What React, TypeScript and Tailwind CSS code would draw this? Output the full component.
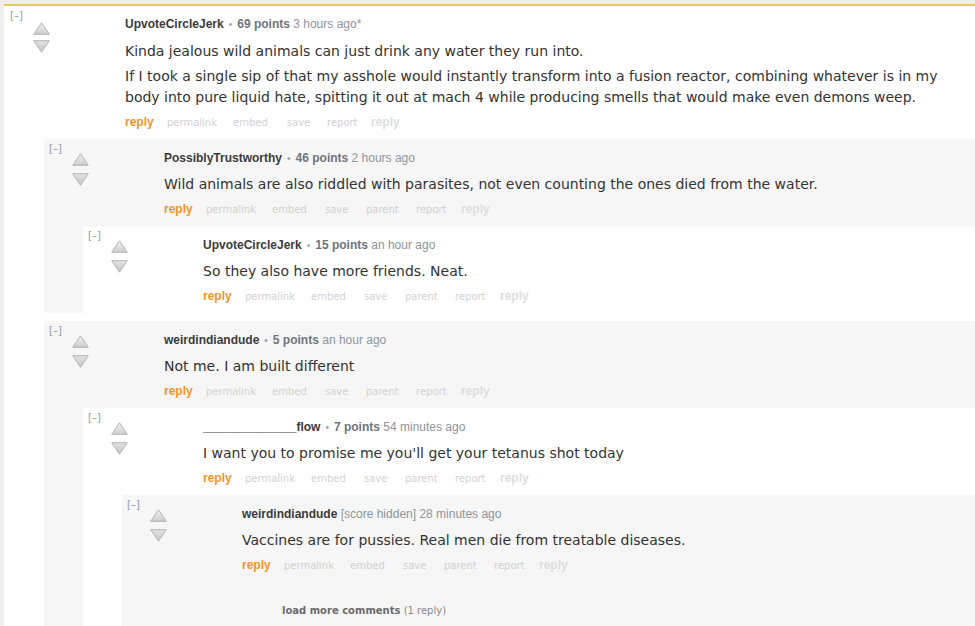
import React from 'react';

type Btn = { label: string; w: string; kind: 'reply' | 'faint' | 'last' };

type CommentData = {
  author: string;
  points?: string;
  time: string;
  body: string[];
  buttons: Btn[];
  children?: CommentData[];
  more?: boolean;
};

const topButtons: Btn[] = [
  { label: 'reply', w: 'w-[42px]', kind: 'reply' },
  { label: 'permalink', w: 'w-[66px]', kind: 'faint' },
  { label: 'embed', w: 'w-[54px]', kind: 'faint' },
  { label: 'save', w: 'w-[40px]', kind: 'faint' },
  { label: 'report', w: 'w-[44px]', kind: 'faint' },
  { label: 'reply', w: '', kind: 'last' },
];

const childButtons: Btn[] = [
  { label: 'reply', w: 'w-[42px]', kind: 'reply' },
  { label: 'permalink', w: 'w-[66px]', kind: 'faint' },
  { label: 'embed', w: 'w-[53px]', kind: 'faint' },
  { label: 'save', w: 'w-[41px]', kind: 'faint' },
  { label: 'parent', w: 'w-[50px]', kind: 'faint' },
  { label: 'report', w: 'w-[45px]', kind: 'faint' },
  { label: 'reply', w: '', kind: 'last' },
];

const thread: CommentData = {
  author: 'UpvoteCircleJerk',
  points: '69 points',
  time: '3 hours ago*',
  body: [
    'Kinda jealous wild animals can just drink any water they run into.',
    'If I took a single sip of that my asshole would instantly transform into a fusion reactor, combining whatever is in my body into pure liquid hate, spitting it out at mach 4 while producing smells that would make even demons weep.',
  ],
  buttons: topButtons,
  children: [
    {
      author: 'PossiblyTrustworthy',
      points: '46 points',
      time: '2 hours ago',
      body: ['Wild animals are also riddled with parasites, not even counting the ones died from the water.'],
      buttons: childButtons,
      children: [
        {
          author: 'UpvoteCircleJerk',
          points: '15 points',
          time: 'an hour ago',
          body: ['So they also have more friends. Neat.'],
          buttons: childButtons,
        },
      ],
    },
    {
      author: 'weirdindiandude',
      points: '5 points',
      time: 'an hour ago',
      body: ['Not me. I am built different'],
      buttons: childButtons,
      children: [
        {
          author: '______________flow',
          points: '7 points',
          time: '54 minutes ago',
          body: ["I want you to promise me you'll get your tetanus shot today"],
          buttons: childButtons,
          children: [
            {
              author: 'weirdindiandude',
              time: '28 minutes ago',
              body: ['Vaccines are for pussies. Real men die from treatable diseases.'],
              buttons: childButtons,
              more: true,
            },
          ],
        },
      ],
    },
  ],
};

function UpArrow() {
  return (
    <svg width="17" height="13" viewBox="0 0 17 13">
      <defs>
        <linearGradient id="arrow-up" x1="0" y1="0" x2="0" y2="1">
          <stop offset="0" stopColor="#f2f2f2" />
          <stop offset="1" stopColor="#cccccc" />
        </linearGradient>
      </defs>
      <path d="M8.5 0.8 L16.3 12.3 H0.7 Z" fill="url(#arrow-up)" stroke="#b5b5b5" strokeWidth="1" strokeLinejoin="round" />
    </svg>
  );
}

function DownArrow() {
  return (
    <svg width="17" height="13" viewBox="0 0 17 13">
      <defs>
        <linearGradient id="arrow-down" x1="0" y1="0" x2="0" y2="1">
          <stop offset="0" stopColor="#e2e2e2" />
          <stop offset="1" stopColor="#c4c4c4" />
        </linearGradient>
      </defs>
      <path d="M0.7 0.7 H16.3 L8.5 12.2 Z" fill="url(#arrow-down)" stroke="#b5b5b5" strokeWidth="1" strokeLinejoin="round" />
    </svg>
  );
}

function Buttons({ items }: { items: Btn[] }) {
  return (
    <div className="mt-[7px] flex h-[15px] items-baseline overflow-visible">
      {items.map((b, i) => {
        if (b.kind === 'reply')
          return (
            <span key={i} className={`${b.w} font-['Liberation_Sans',Arial,sans-serif] text-[12px] leading-[15px] font-bold text-[#f4952a]`}>
              {b.label}
            </span>
          );
        if (b.kind === 'last')
          return (
            <span key={i} className="font-['Liberation_Sans',Arial,sans-serif] text-[12px] leading-[15px] font-bold text-[#dedede]">
              {b.label}
            </span>
          );
        return (
          <span key={i} className={`${b.w} font-['DejaVu_Sans',Verdana,sans-serif] text-[10px] leading-[12px] text-[#d2d2d2]`}>
            {b.label}
          </span>
        );
      })}
    </div>
  );
}

function Comment({ c, depth }: { c: CommentData; depth: number }) {
  const top = depth === 0;
  const gray = depth % 2 === 1;
  return (
    <div
      className={`${top ? 'border-t-2 border-[#eccb52] pl-[6px]' : 'rounded-l-[3px] pl-[5px]'} ${
        gray ? 'bg-[#f6f6f6]' : 'bg-white'
      }`}
    >
      <div className="flex items-start pb-[9px]">
        <span className="mt-[4px] w-[23px] shrink-0 font-['DejaVu_Sans',Verdana,sans-serif] text-[10px] leading-[12px] text-[#8b9bb0]">
          [–]
        </span>
        <div className={`flex w-[17px] shrink-0 flex-col ${top ? 'mt-[16px] gap-[5px]' : 'mt-[14px] gap-[7px]'}`}>
          <UpArrow />
          <DownArrow />
        </div>
        <div className={`ml-[75px] min-w-0 flex-1 ${top ? 'pt-[10px]' : 'pt-[11px]'}`}>
          <div className="h-[16px] whitespace-nowrap font-['Liberation_Sans',Arial,sans-serif] text-[12px] leading-[16px]">
            <span className="font-bold text-[#3b3b3b]">{c.author}</span>
            {c.points ? (
              <>
                <span className="mx-[5px] text-[10px] text-[#a3a3a3]">•</span>
                <span className="font-bold text-[#6e757e]">{c.points}</span>
              </>
            ) : (
              <span className="text-[#8e959e]"> [score hidden]</span>
            )}
            <span className="text-[#8e959e]"> {c.time}</span>
          </div>
          <div
            className={`${top ? 'mt-[9px]' : 'mt-[8px]'} flex max-w-[840px] flex-col gap-[4px] font-['DejaVu_Sans',Verdana,sans-serif] text-[14px] leading-[21px] text-[#333333]`}
          >
            {c.body.map((p, i) => (
              <p key={i}>{p}</p>
            ))}
          </div>
          <Buttons items={c.buttons} />
        </div>
      </div>
      {c.children && (
        <div className="ml-[34px] flex flex-col gap-[8px]">
          {c.children.map((k, i) => (
            <Comment key={i} c={k} depth={depth + 1} />
          ))}
        </div>
      )}
      {c.more && (
        <div className="ml-[34px] pl-[121px] pt-[22px] pb-[30px] font-['DejaVu_Sans',Verdana,sans-serif] text-[10px] leading-[14px]">
          <span className="font-bold text-[#6b6b6b]">load more comments</span>
          <span className="text-[#8a8a8a]"> (1 reply)</span>
        </div>
      )}
    </div>
  );
}

export default function App() {
  return (
    <div className="h-[626px] w-[975px] overflow-hidden bg-[#efefef] pl-[4px] pt-[4px]">
      <Comment c={thread} depth={0} />
    </div>
  );
}
